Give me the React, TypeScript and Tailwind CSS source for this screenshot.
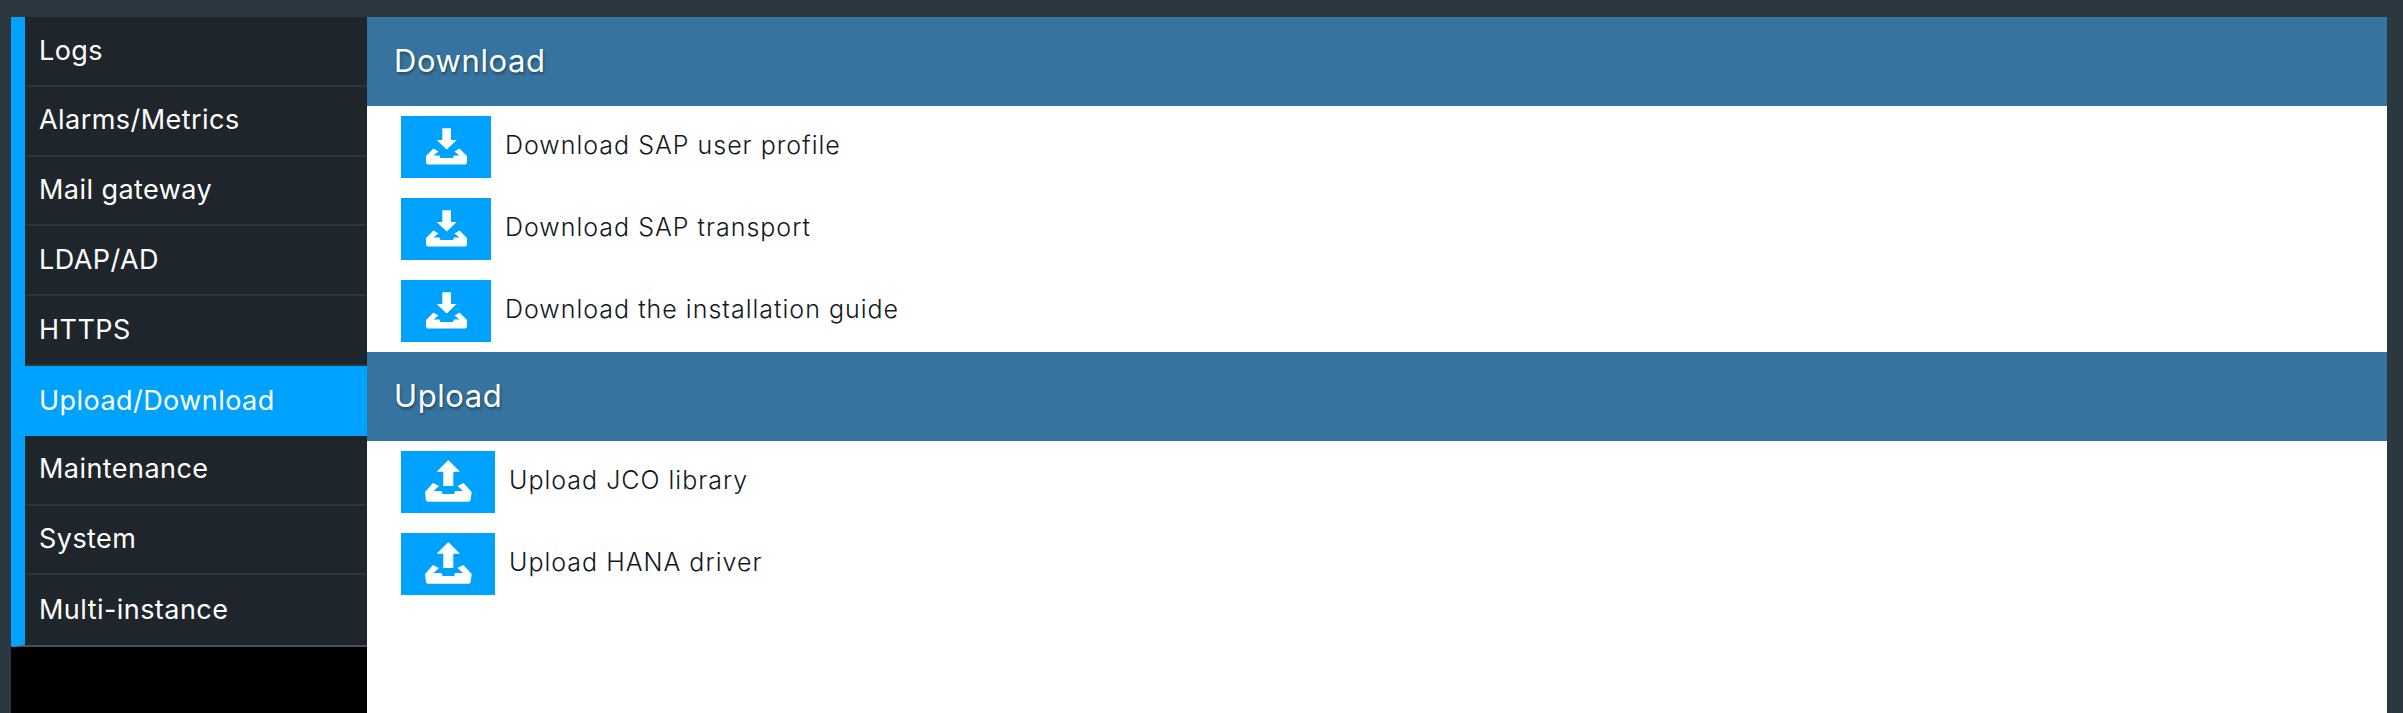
const menuItems = [
  "Logs",
  "Alarms/Metrics",
  "Mail gateway",
  "LDAP/AD",
  "HTTPS",
  "Upload/Download",
  "Maintenance",
  "System",
  "Multi-instance",
];

function DownloadIcon() {
  return (
    <svg viewBox="0 0 90 62" className="w-[90px] h-[62px]" fill="white">
      <path d="M41.3 12.3 H50 V24 H55.7 L45.7 33.5 L35.7 24 H41.3 Z" />
      <path d="M25 40 L32.5 32.5 L37.5 35.5 L32.5 39.5 L38.5 39.5 L39.5 42 L52 42 L53 39.5 L58.5 39.5 L53.5 35.5 L58.5 32.5 L66 40 L66 47 L64.5 48.5 L26.5 48.5 L25 47 Z" />
    </svg>
  );
}

function UploadIcon() {
  return (
    <svg viewBox="0 0 94 62" className="w-[94px] h-[62px]" fill="white">
      <path d="M47.3 9 L59 20.7 H52.3 V35 H42.3 V20.7 H35.7 Z" />
      <path d="M24 41 L32 32 L38 35 L32.5 40 L40.5 40 L41.5 43 L53 43 L54 40 L62 40 L56.5 35 L62.5 32 L70.7 41 L69.5 49.5 L68 50.7 L26.5 50.7 L25 49.5 Z" />
    </svg>
  );
}

function Row({ label, kind }: { label: string; kind: "down" | "up" }) {
  return (
    <div className="flex items-center h-[62px] mb-[20px] ml-[34px]">
      <div className="bg-[#00a2ff] shrink-0">
        {kind === "down" ? <DownloadIcon /> : <UploadIcon />}
      </div>
      <span className="ml-[14px] pb-[2px] text-[25px] font-light tracking-[1px] text-[#12181c]">{label}</span>
    </div>
  );
}

function SectionHeader({ title }: { title: string }) {
  return (
    <div className="h-[89px] bg-[#36749f] flex items-center pl-[27px] pb-[1px] text-white text-[31px] tracking-[0.6px] font-normal [text-shadow:1px_2px_3px_rgba(0,0,0,0.4)]">
      {title}
    </div>
  );
}

export default function App() {
  return (
    <div className="h-[713px] overflow-hidden bg-[#2b383f] pt-[17px] pl-[11px] pr-[16px] flex font-['Inter','Noto_Sans',sans-serif]">
      <div className="w-[356px] shrink-0 bg-black">
        <div className="border-l-[14px] border-[#00a2ff] border-b-2 border-b-[#4d4f52]">
          {menuItems.map((item) => (
            <div
              key={item}
              className={
                item === "Upload/Download"
                  ? "h-[69.8px] bg-[#00a2ff] flex items-center pl-[14px] text-[27px] tracking-[0.45px] font-normal text-white"
                  : "h-[69.8px] bg-[#1e262c] border-b-2 border-[#2c343a] last:border-b-0 flex items-center pl-[14px] text-[27px] tracking-[0.45px] font-normal text-white"
              }
            >
              {item}
            </div>
          ))}
        </div>
      </div>
      <div className="flex-1 bg-white">
        <SectionHeader title="Download" />
        <div className="pt-[10px] h-[246px]">
          <Row label="Download SAP user profile" kind="down" />
          <Row label="Download SAP transport" kind="down" />
          <Row label="Download the installation guide" kind="down" />
        </div>
        <SectionHeader title="Upload" />
        <div className="pt-[10px]">
          <Row label="Upload JCO library" kind="up" />
          <Row label="Upload HANA driver" kind="up" />
        </div>
      </div>
    </div>
  );
}
